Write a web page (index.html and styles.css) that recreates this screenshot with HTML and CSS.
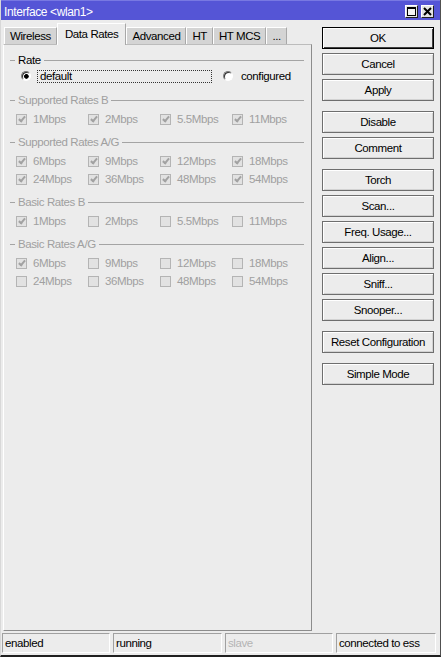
FILE: index.html
```html
<!DOCTYPE html>
<html>
<head>
<meta charset="utf-8">
<title>Interface &lt;wlan1&gt;</title>
<link rel="stylesheet" href="styles.css">
</head>
<body>
<div class="window">
  <div class="titlebar">
    <span class="title">Interface &lt;wlan1&gt;</span>
    <div class="title-btns">
      <span class="tbtn"><svg width="9" height="9" viewBox="0 0 9 9"><rect x="0.5" y="0.5" width="8" height="8" fill="#f4f4f4" stroke="#000" stroke-width="1"/><line x1="0" y1="1.5" x2="9" y2="1.5" stroke="#000" stroke-width="1"/></svg></span>
      <span class="tbtn"><svg width="9" height="9" viewBox="0 0 9 9"><path d="M1 1 L8 8 M8 1 L1 8" stroke="#000" stroke-width="2" fill="none"/></svg></span>
    </div>
  </div>
  <div class="main">
    <div class="left">
      <div class="tabs">
        <span class="tab">Wireless</span>
        <span class="tab active">Data Rates</span>
        <span class="tab">Advanced</span>
        <span class="tab">HT</span>
        <span class="tab">HT MCS</span>
        <span class="tab">...</span>
      </div>
      <div class="panel">
        <div class="group rate">
          <div class="legend"><span>Rate</span></div>
          <div class="rate-row">
            <span class="radio checked"></span>
            <span class="focus-label">default</span>
            <span class="radio second"></span>
            <span class="radio-text">configured</span>
          </div>
        </div>
        <div class="group disabled">
          <div class="legend"><span>Supported Rates B</span></div>
          <div class="checks">
            <span class="check"><span class="box on"></span>1Mbps</span>
            <span class="check"><span class="box on"></span>2Mbps</span>
            <span class="check"><span class="box on"></span>5.5Mbps</span>
            <span class="check"><span class="box on"></span>11Mbps</span>
          </div>
        </div>
        <div class="group disabled">
          <div class="legend"><span>Supported Rates A/G</span></div>
          <div class="checks">
            <span class="check"><span class="box on"></span>6Mbps</span>
            <span class="check"><span class="box on"></span>9Mbps</span>
            <span class="check"><span class="box on"></span>12Mbps</span>
            <span class="check"><span class="box on"></span>18Mbps</span>
            <span class="check"><span class="box on"></span>24Mbps</span>
            <span class="check"><span class="box on"></span>36Mbps</span>
            <span class="check"><span class="box on"></span>48Mbps</span>
            <span class="check"><span class="box on"></span>54Mbps</span>
          </div>
        </div>
        <div class="group disabled">
          <div class="legend"><span>Basic Rates B</span></div>
          <div class="checks">
            <span class="check"><span class="box on"></span>1Mbps</span>
            <span class="check"><span class="box"></span>2Mbps</span>
            <span class="check"><span class="box"></span>5.5Mbps</span>
            <span class="check"><span class="box"></span>11Mbps</span>
          </div>
        </div>
        <div class="group disabled">
          <div class="legend"><span>Basic Rates A/G</span></div>
          <div class="checks">
            <span class="check"><span class="box on"></span>6Mbps</span>
            <span class="check"><span class="box"></span>9Mbps</span>
            <span class="check"><span class="box"></span>12Mbps</span>
            <span class="check"><span class="box"></span>18Mbps</span>
            <span class="check"><span class="box"></span>24Mbps</span>
            <span class="check"><span class="box"></span>36Mbps</span>
            <span class="check"><span class="box"></span>48Mbps</span>
            <span class="check"><span class="box"></span>54Mbps</span>
          </div>
        </div>
      </div>
    </div>
    <div class="buttons">
      <div class="btn-group">
        <span class="btn default">OK</span>
        <span class="btn">Cancel</span>
        <span class="btn">Apply</span>
      </div>
      <div class="btn-group">
        <span class="btn">Disable</span>
        <span class="btn">Comment</span>
      </div>
      <div class="btn-group">
        <span class="btn">Torch</span>
        <span class="btn">Scan...</span>
        <span class="btn">Freq. Usage...</span>
        <span class="btn">Align...</span>
        <span class="btn">Sniff...</span>
        <span class="btn">Snooper...</span>
      </div>
      <div class="btn-group">
        <span class="btn">Reset Configuration</span>
      </div>
      <div class="btn-group">
        <span class="btn">Simple Mode</span>
      </div>
    </div>
  </div>
  <div class="statusbar">
    <span class="field">enabled</span>
    <span class="field">running</span>
    <span class="field dim">slave</span>
    <span class="field">connected to ess</span>
  </div>
</div>
</body>
</html>
```
FILE: styles.css
```css
body {
  margin: 0;
  background: #ececec;
  font-family: "Liberation Sans", Arial, sans-serif;
  font-size: 11.5px;
  letter-spacing: -0.4px;
  color: #000;
}

.window {
  width: 441px;
  height: 657px;
  box-sizing: border-box;
  border-left: 1px solid #d8d8d8;
  border-right: 1px solid #505050;
  border-bottom: 2px solid #202020;
  padding-bottom: 2px;
  display: flex;
  flex-direction: column;
  background: #ececec;
}

/* title bar */
.titlebar {
  height: 20px;
  flex: none;
  box-sizing: border-box;
  background: #5555d6;
  border-top: 1px solid #7878e2;
  display: flex;
  align-items: center;
  justify-content: space-between;
  padding: 0 6px 0 3px;
  color: #fff;
}
.title {
  font-size: 12px;
  padding-top: 2px;
}
.title-btns {
  display: flex;
  gap: 3px;
  padding-top: 2px;
}
.tbtn {
  width: 13px;
  height: 13px;
  box-sizing: border-box;
  background: #e4e4e4;
  border: 1px solid;
  border-color: #fff #202020 #202020 #fff;
  display: flex;
  align-items: center;
  justify-content: center;
}

/* main */
.main {
  flex: 1;
  min-height: 0;
  display: flex;
  padding-left: 2px;
}
.left {
  width: 309px;
  flex: none;
  display: flex;
  flex-direction: column;
}

/* tabs */
.tabs {
  height: 24px;
  flex: none;
  display: flex;
  align-items: flex-end;
  padding-left: 1px;
}
.tab {
  height: 17px;
  box-sizing: border-box;
  padding: 0 5px;
  background: #d4d4d4;
  border: 1px solid;
  border-color: #fff #a8a8a8 transparent #fff;
  border-bottom: none;
  line-height: 17px;
  white-space: nowrap;
}
.tab.active {
  height: 22px;
  margin-bottom: -1px;
  padding: 0 7px;
  background: #ececec;
  line-height: 20px;
  position: relative;
  z-index: 1;
}

/* panel */
.panel {
  flex: 1;
  box-sizing: border-box;
  border: 1px solid;
  border-color: #bcbcbc #8c8c8c #8c8c8c #fff;
  padding: 8px 7px 0 6px;
}
.group + .group {
  margin-top: 7px;
}
.group.rate {
  padding-bottom: 1px;
}
.legend {
  height: 14px;
  display: flex;
  align-items: center;
}
.legend::before,
.legend::after {
  content: "";
  height: 1px;
  background: #a4a4a4;
}
.legend::before {
  width: 5px;
}
.legend::after {
  flex: 1;
}
.legend span {
  padding: 0 3px;
}
.disabled .legend span {
  color: #a0a0a0;
}

/* rate row */
.rate-row {
  height: 18px;
  display: flex;
  align-items: center;
  padding-left: 11px;
}
.radio {
  width: 10px;
  height: 10px;
  flex: none;
  box-sizing: border-box;
  border-radius: 50%;
  border: 1px solid;
  border-color: #7a7a7a #fff #fff #7a7a7a;
  background: #fff;
  box-shadow: inset 1px 1px 0 #303030;
}
.radio.checked {
  background: radial-gradient(circle at 55% 55%, #000 0 2px, #fff 2.6px);
}
.focus-label {
  margin-left: 6px;
  width: 175px;
  height: 13px;
  box-sizing: border-box;
  border: 1px dotted #333;
  padding-left: 2px;
  line-height: 11px;
}
.radio.second {
  margin-left: 11px;
}
.radio-text {
  margin-left: 8px;
}

/* checkboxes */
.checks {
  display: grid;
  grid-template-columns: repeat(4, 72px);
  grid-auto-rows: 18px;
  margin-top: 3px;
  padding-left: 6px;
}
.check {
  display: flex;
  align-items: center;
  gap: 6px;
  color: #a0a0a0;
  white-space: nowrap;
}
.box {
  width: 11px;
  height: 11px;
  flex: none;
  box-sizing: border-box;
  border: 1px solid #b4b4b4;
  background: #e2e2e2;
  display: flex;
  align-items: center;
  justify-content: center;
}
.box.on::after {
  content: "";
  width: 2px;
  height: 5px;
  margin-top: -2px;
  border-right: 2px solid #a2a2a2;
  border-bottom: 2px solid #a2a2a2;
  transform: rotate(40deg);
}

/* right buttons */
.buttons {
  width: 112px;
  flex: none;
  margin-left: 10px;
  padding-top: 7px;
  display: flex;
  flex-direction: column;
  gap: 10px;
}
.btn-group {
  display: flex;
  flex-direction: column;
  gap: 4px;
}
.btn {
  height: 22px;
  box-sizing: border-box;
  border: 1px solid #6e6e6e;
  background: #ececec;
  box-shadow: inset 1px 1px 0 #fff, inset -1px -1px 0 #d2d2d2;
  display: flex;
  align-items: center;
  justify-content: center;
  white-space: nowrap;
}
.btn.default {
  border-color: #000;
  box-shadow: inset 1px 1px 0 #fff, inset -1px -1px 0 #404040;
}

/* status bar */
.statusbar {
  height: 20px;
  flex: none;
  margin-top: 2px;
  display: grid;
  grid-template-columns: 108px 109px 108px 1fr;
  column-gap: 3px;
  padding: 0 4px 0 1px;
}
.field {
  box-sizing: border-box;
  border: 1px solid;
  border-color: #a0a0a0 #fff #fff #a0a0a0;
  padding-left: 2px;
  line-height: 18px;
  white-space: nowrap;
  overflow: hidden;
}
.field.dim {
  color: #b4b4b4;
}
```
